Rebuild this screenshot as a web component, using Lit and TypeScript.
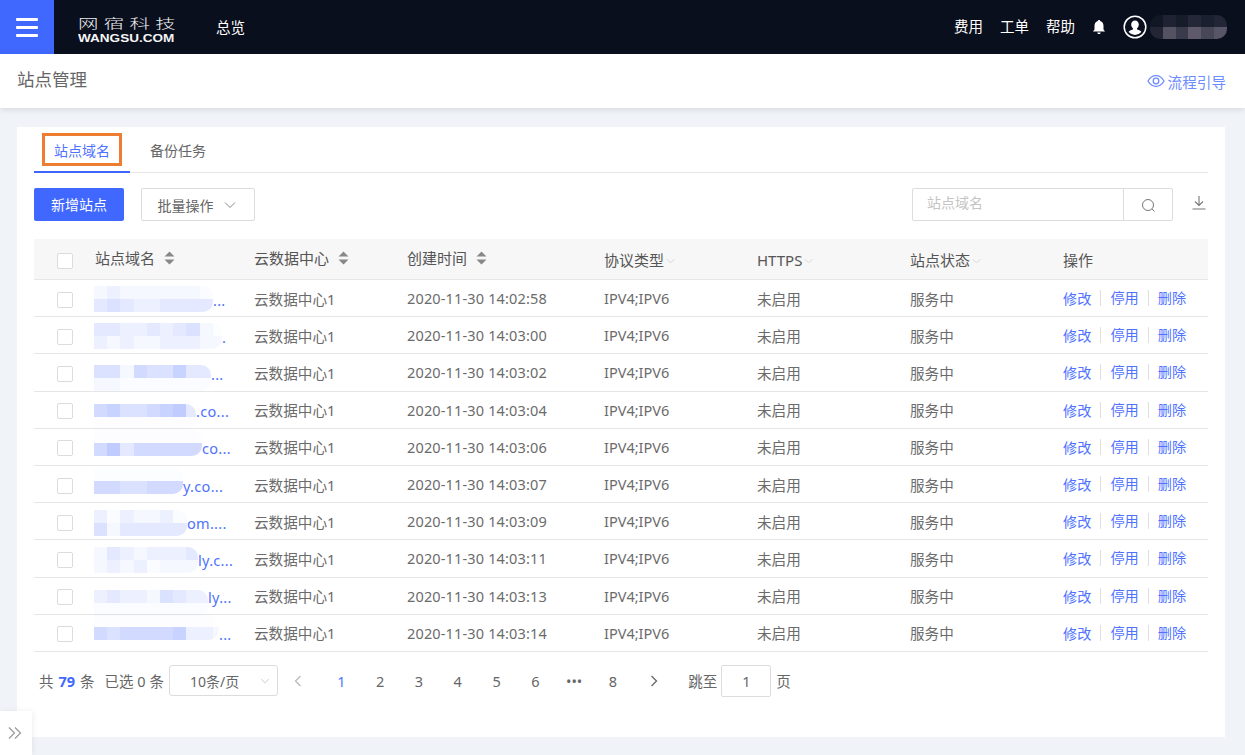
import { LitElement, html, css, svg } from "lit";
import { customElement } from "lit/decorators.js";

type Row = { top: number[]; bottom: number[]; tail: string; w: number; dy: number; time: string };

const rows: Row[] = [
  { top: [1, 2, 1, 1, 1, 1, 1, 1, 0.5], bottom: [3, 4, 3, 2, 2, 3, 3, 3, 3], tail: "...", w: 119, dy: 1, time: "14:02:58" },
  { top: [3, 3, 2, 2, 3, 2, 3, 4, 1, 0.3], bottom: [2, 1, 2, 1, 1, 2, 2, 2, 1, 1], tail: ".", w: 128, dy: 1, time: "14:03:00" },
  { top: [4, 4, 1, 5, 4, 4, 6, 3, 3], bottom: [1, 1, 0.5, 0.5, 0.5, 0.5, 0.5, 0.5, 0.5], tail: "...", w: 117, dy: 6, time: "14:03:02" },
  { top: [5, 6, 4, 4, 5, 6, 7, 3], bottom: [0.2, 0.2, 0.2, 0.2, 0.2, 0.2, 0.2, 0.2], tail: ".co...", w: 102, dy: 7, time: "14:03:04" },
  { top: [0.2, 0.2, 0.2, 0.2, 0.2, 0.2, 0.2, 0.2, 0.2], bottom: [5, 7, 3, 5, 5, 5, 5, 5, 5], tail: "co...", w: 108, dy: -4, time: "14:03:06" },
  { top: [0.3, 0.3, 0.3, 0.3, 0.3, 0.3, 0.3], bottom: [5, 5, 4, 4, 5, 5, 5], tail: "y.co...", w: 89, dy: -3, time: "14:03:07" },
  { top: [2, 0.5, 2, 1, 1, 2, 0.5, 1], bottom: [4, 1, 3, 3, 3, 3, 3, 3], tail: "om....", w: 93, dy: 2, time: "14:03:09" },
  { top: [1, 3, 2, 1, 2, 2, 2, 3], bottom: [1, 2, 1, 2, 0.5, 1, 1, 1], tail: "ly.c...", w: 104, dy: 2, time: "14:03:11" },
  { top: [2, 3, 2, 2, 1, 4, 3, 2, 2], bottom: [0.5, 0.5, 0.5, 0.5, 0.5, 0.4, 0.4, 0.4, 0.4], tail: "ly...", w: 114, dy: 7, time: "14:03:13" },
  { top: [0.2, 0.2, 0.2, 0.2, 0.2, 0.2, 0.2, 0.2, 0.2, 0.1], bottom: [5, 4, 5, 5, 5, 5, 6, 2, 2, 1], tail: "...", w: 125, dy: -6, time: "14:03:14" },
];

const nameBlocks = [0.25, 0.7, 0.45, 0.8, 0.6, 0.75];
const pages = ["2", "3", "4", "5", "6", "•••", "8"];

const chevron = (cls: string) => svg`<svg class=${cls} viewBox="0 0 12 8"><path d="M1 1.5 6 6.5 11 1.5" fill="none" stroke="currentColor" stroke-width="1"/></svg>`;

@customElement("app-root")
export class AppRoot extends LitElement {
  static styles = css`
    :host {
      display: block;
      height: 755px;
      overflow: hidden;
      position: relative;
      background: #f0f3f8;
      color: #666;
      font-family: "Noto Sans", "Noto Sans CJK SC", sans-serif;
      font-size: 14.5px;
    }
    .top {
      display: flex;
      align-items: center;
      height: 54px;
      background: #0a0f1e;
      color: #fff;
    }
    .burger {
      width: 54px;
      height: 54px;
      background: #4068ff;
      display: flex;
      flex-direction: column;
      align-items: center;
      justify-content: center;
      gap: 5px;
    }
    .burger i { display: block; width: 22px; height: 3px; background: #fff; border-radius: 1px; }
    .logo { margin-left: 24px; width: 100px; display: flex; flex-direction: column; gap: 3px; margin-top: 4px; }
    .logo b {
      font-family: "Noto Sans CJK SC", sans-serif;
      font-weight: 300;
      font-size: 13px;
      line-height: 14px;
      letter-spacing: 3.4px;
      color: #eee;
      white-space: nowrap;
      transform: scaleX(1.57);
      transform-origin: left;
    }
    .logo span {
      font-family: "Liberation Sans", sans-serif;
      font-weight: 700;
      font-size: 10.5px;
      line-height: 10px;
      color: #f5f5f5;
      transform: scaleX(1.29);
      transform-origin: left;
      white-space: nowrap;
    }
    .overview { margin-left: 38px; margin-top: -2px; }
    .top-right { margin-left: auto; display: flex; align-items: center; margin-right: 18px; }
    .top-right .l { margin-right: 17px; margin-top: -3px; }
    .bell { width: 16px; height: 16px; margin: 0 16px 0 -1px; }
    .avatar { width: 24px; height: 24px; }
    .user { display: flex; flex-direction: column; margin-left: 3px; width: 77px; height: 24px; border-radius: 10px; overflow: hidden; }
    .user div { display: flex; flex: 1; }
    .user i { flex: 1; }
    .sub {
      height: 54px;
      background: #fff;
      box-shadow: 0 2px 6px rgba(0, 0, 0, 0.1);
      display: flex;
      justify-content: space-between;
      padding: 0 19px 0 17px;
      position: relative;
    }
    .sub .title { font-size: 17.5px; margin-top: 12px; line-height: 26px; color: #666; }
    .guide { display: flex; align-items: center; gap: 3px; color: #6e8cff; margin-top: 13px; height: 28px; font-size: 14.6px; }
    .guide svg { width: 18px; height: 14px; }
    .card {
      margin: 19px 20px 0 17px;
      height: 610px;
      background: #fff;
      padding: 0 17px;
      box-sizing: border-box;
    }
    .tabs {
      display: flex;
      height: 46px;
      border-bottom: 1px solid #e6e6e6;
      box-sizing: border-box;
    }
    .tab { width: 96px; height: 46px; box-sizing: border-box; display: flex; justify-content: center; align-items: center; position: relative; font-size: 14px; }
    .tab.on { color: #4f72ff; border-bottom: 2px solid #3f66ff; }
    .tab.on .box { border: 3px solid #ed7d31; height: 33px; width: 80px; box-sizing: border-box; display: flex; align-items: center; justify-content: center; margin-top: 1px; white-space: nowrap; }
    .tab.off { width: 94px; margin-left: 1px; color: #666; }
    .bar { display: flex; align-items: center; margin-top: 15px; height: 33px; }
    .primary {
      width: 90px; height: 33px; background: #4068ff; color: #fff;
      display: flex; align-items: center; justify-content: center;
      border-radius: 2px; font-size: 14px; padding-bottom: 1px; box-sizing: border-box;
    }
    .batch {
      margin-left: 17px; width: 114px; height: 33px; box-sizing: border-box;
      border: 1px solid #dcdcdc; border-radius: 2px;
      display: flex; align-items: center; justify-content: center; gap: 10px; font-size: 14px; padding-right: 3px;
    }
    .chev { width: 12px; height: 8px; color: #888; }
    .search {
      margin-left: auto; width: 261px; height: 33px; box-sizing: border-box;
      border: 1px solid #dcdcdc; border-radius: 2px; display: flex;
    }
    .search .ph { flex: 1; padding-left: 14px; color: #c4c4c4; font-size: 14px; line-height: 28px; border-right: 1px solid #dcdcdc; }
    .search .btn { width: 48px; display: flex; align-items: center; justify-content: center; }
    .search svg { width: 15px; height: 15px; margin-top: 1px; }
    .dl { width: 14px; height: 16px; margin: -4px 2px 0 19px; }
    .grid {
      display: grid;
      grid-template-columns: 61px 159px 153px 197px 153px 153px 153px 145px;
      align-items: center;
    }
    .head {
      margin-top: 18px; height: 41px; background: #f7f7f7; border-bottom: 1px solid #e6e6e6;
      box-sizing: border-box; color: #555; font-size: 15px;
    }
    .head .cell { display: flex; align-items: center; gap: 9px; margin-top: -3px; }
    .head .cell.f { gap: 2px; margin-top: 1px; }
    .row { height: 37.2px; border-bottom: 1px solid #e6e6e6; box-sizing: border-box; font-size: 14.6px; color: #6b6b6b; }
    .row .cell { white-space: nowrap; }
    .time { font-size: 14.5px; letter-spacing: 0.15px; }
    .proto { font-size: 14.5px; }
    .cb { width: 16px; height: 16px; box-sizing: border-box; border: 1px solid #dcdcdc; border-radius: 2px; margin: 3px 0 0 23px; background: #fff; }
    .sorter { width: 11px; height: 14px; color: #888; margin-top: 0; }
    .fchev { width: 9px; height: 6px; color: #ccc; margin-top: 2px; }
    .name { display: flex; align-items: center; color: #4f72ff; margin-left: 0; }
    .mask {
      display: grid; grid-auto-flow: column; grid-template-rows: 13px 13px; grid-auto-columns: 13.2px;
      height: 26px; overflow: hidden; border-radius: 0 10px 10px 0; flex: none; margin-left: -1px;
    }
    .name .tail { font-size: 14.5px; letter-spacing: 0.3px; margin-top: 3px; }
    .ops { display: flex; align-items: center; color: #4f72ff; font-size: 14.2px; }
    .ops span + span { border-left: 1px solid #e0e0e0; margin-left: 9px; padding-left: 9px; line-height: 16px; }
    .pager { display: flex; align-items: center; margin-top: 13px; height: 32px; font-size: 14.5px; margin-left: 5px; }
    .pager .t79 { color: #4068ff; font-weight: 700; margin: 0 5px; }
    .sel { margin-left: 10px; }
    .size {
      margin-left: 5px; width: 109px; height: 31px; box-sizing: border-box;
      border: 1px solid #dcdcdc; border-radius: 3px; display: flex; align-items: center; font-size: 14px;
      padding-left: 20px; justify-content: space-between; padding-right: 7px;
    }
    .size .chev { color: #bbb; width: 10px; height: 6px; }
    .pn { width: 16px; height: 16px; color: #bbb; flex: none; }
    .pn.prev { margin-left: 12px; }
    .pn.next { color: #666; margin-left: 14px; }
    .num { width: 38.8px; text-align: center; flex: none; }
    .num.on { color: #4f72ff; margin-left: 16px; }
    .goto { margin-left: 26px; }
    .jump {
      margin-left: 4px; width: 50px; height: 32px; box-sizing: border-box; border: 1px solid #dcdcdc; border-radius: 2px;
      display: flex; align-items: center; justify-content: center; margin-right: 5px;
    }
    .toggle {
      position: absolute; left: 0; bottom: 0; width: 32px; height: 44px; background: #fff;
      box-shadow: 1px 0 6px rgba(0, 0, 0, 0.07);
      display: flex; align-items: center; justify-content: center;
    }
    .toggle svg { width: 16px; height: 14px; margin: 0 2px 0 0; }
  `;

  private cell(level: number) {
    return html`<i style="background: rgba(74, 108, 255, ${(level * 0.05).toFixed(3)})"></i>`;
  }

  private mask(r: Row) {
    const n = r.top.length;
    const cells = [];
    for (let i = 0; i < n; i++) {
      cells.push(this.cell(r.top[i]));
      cells.push(this.cell(r.bottom[i]));
    }
    return html`<span class="mask" style="width:${r.w}px; transform: translateY(${r.dy}px)">${cells}</span>`;
  }

  render() {
    return html`
      <div class="top">
        <div class="burger"><i></i><i></i><i></i></div>
        <div class="logo"><b>网宿科技</b><span>WANGSU.COM</span></div>
        <div class="overview">总览</div>
        <div class="top-right">
          <span class="l">费用</span><span class="l">工单</span><span class="l">帮助</span>
          <svg class="bell" viewBox="0 0 16 16"><path d="M8 1c.7 0 1.2.5 1.2 1.1C11.4 2.700 12.500 4.500 12.500 7v3.500L14 12.500H2L3.500 10.500V7C3.500 4.500 4.600 2.700 6.800 2.100 6.800 1.500 7.300 1 8 1ZM6.300 13.500h3.400C9.600 14.500 8.900 15 8 15s-1.600-.5-1.700-1.500Z" fill="#fff"/></svg>
          <svg class="avatar" viewBox="0 0 24 24"><circle cx="12" cy="12" r="10.800" fill="#0a0f1e" stroke="#fff" stroke-width="1.500"/><path d="M12 5.500c2.300 0 3.800 1.700 3.800 4 0 1.700-.8 3-1.700 3.800v1.200c2 .6 3.900 1.300 4.300 2.600A9 9 0 0 1 12 20a9 9 0 0 1-6.400-2.900c.4-1.300 2.300-2 4.300-2.600v-1.200c-.9-.8-1.700-2.100-1.700-3.800 0-2.300 1.500-4 3.800-4Z" fill="#fff"/></svg>
          <div class="user">
            <div>${nameBlocks.map((a) => html`<i style="background: rgba(150,150,170,${(a * 0.22).toFixed(2)})"></i>`)}</div>
            <div>${nameBlocks.map((a) => html`<i style="background: rgba(160,150,170,${(a * 0.7).toFixed(2)})"></i>`)}</div>
          </div>
        </div>
      </div>
      <div class="sub">
        <div class="title">站点管理</div>
        <div class="guide">
          <svg viewBox="0 0 18 14"><path d="M1 7c2-3.500 4.800-5.300 8-5.300S15 3.500 17 7c-2 3.500-4.800 5.300-8 5.300S3 10.500 1 7Z" fill="none" stroke="currentColor" stroke-width="1.300"/><circle cx="9" cy="7" r="2.800" fill="none" stroke="currentColor" stroke-width="1.300"/></svg>
          流程引导
        </div>
      </div>
      <div class="card">
        <div class="tabs">
          <div class="tab on"><span class="box">站点域名</span></div>
          <div class="tab off">备份任务</div>
        </div>
        <div class="bar">
          <div class="primary">新增站点</div>
          <div class="batch">批量操作 ${chevron("chev")}</div>
          <div class="search">
            <div class="ph">站点域名</div>
            <div class="btn"><svg viewBox="0 0 15 15"><circle cx="7" cy="7" r="5.500" fill="none" stroke="#777" stroke-width="1"/><path d="m11 11 2.500 2.500" stroke="#777" stroke-width="1"/></svg></div>
          </div>
          <svg class="dl" viewBox="0 0 14 16"><path d="M7 1v9M3 6.500l4 4 4-4M0.500 14h13" fill="none" stroke="#777" stroke-width="1.100"/></svg>
        </div>
        <div class="grid head">
          <div class="cb"></div>
          <div class="cell">站点域名 ${this.sorter()}</div>
          <div class="cell">云数据中心 ${this.sorter()}</div>
          <div class="cell">创建时间 ${this.sorter()}</div>
          <div class="cell f">协议类型 ${chevron("fchev")}</div>
          <div class="cell f">HTTPS ${chevron("fchev")}</div>
          <div class="cell f">站点状态 ${chevron("fchev")}</div>
          <div class="cell f">操作</div>
        </div>
        ${rows.map(
          (r) => html`
            <div class="grid row">
              <div class="cb"></div>
              <div class="cell name">${this.mask(r)}<span class="tail">${r.tail}</span></div>
              <div class="cell">云数据中心1</div>
              <div class="cell time">2020-11-30 ${r.time}</div>
              <div class="cell proto">IPV4;IPV6</div>
              <div class="cell">未启用</div>
              <div class="cell">服务中</div>
              <div class="cell ops"><span>修改</span><span>停用</span><span>删除</span></div>
            </div>
          `
        )}
        <div class="pager">
          <span>共</span><span class="t79">79</span><span>条</span>
          <span class="sel">已选 0 条</span>
          <div class="size">10条/页 ${chevron("chev")}</div>
          <svg class="pn prev" viewBox="0 0 16 16"><path d="M10.500 3 5.500 8l5 5" fill="none" stroke="currentColor" stroke-width="1.300"/></svg>
          <span class="num on">1</span>
          ${pages.map((p) => html`<span class="num">${p}</span>`)}
          <svg class="pn next" viewBox="0 0 16 16"><path d="M5.500 3l5 5-5 5" fill="none" stroke="currentColor" stroke-width="1.300"/></svg>
          <span class="goto">跳至</span>
          <div class="jump">1</div>
          <span>页</span>
        </div>
      </div>
      <div class="toggle">
        <svg viewBox="0 0 16 14"><path d="M2 1.500 7.500 7 2 12.500M8 1.500 13.500 7 8 12.500" fill="none" stroke="#999" stroke-width="1.200"/></svg>
      </div>
    `;
  }

  private sorter() {
    return svg`<svg class="sorter" viewBox="0 0 11 14"><path d="M5.500 0.500 10.500 5.500H0.500ZM5.500 13.500 0.500 8.500H10.500Z" fill="currentColor"/></svg>`;
  }
}
